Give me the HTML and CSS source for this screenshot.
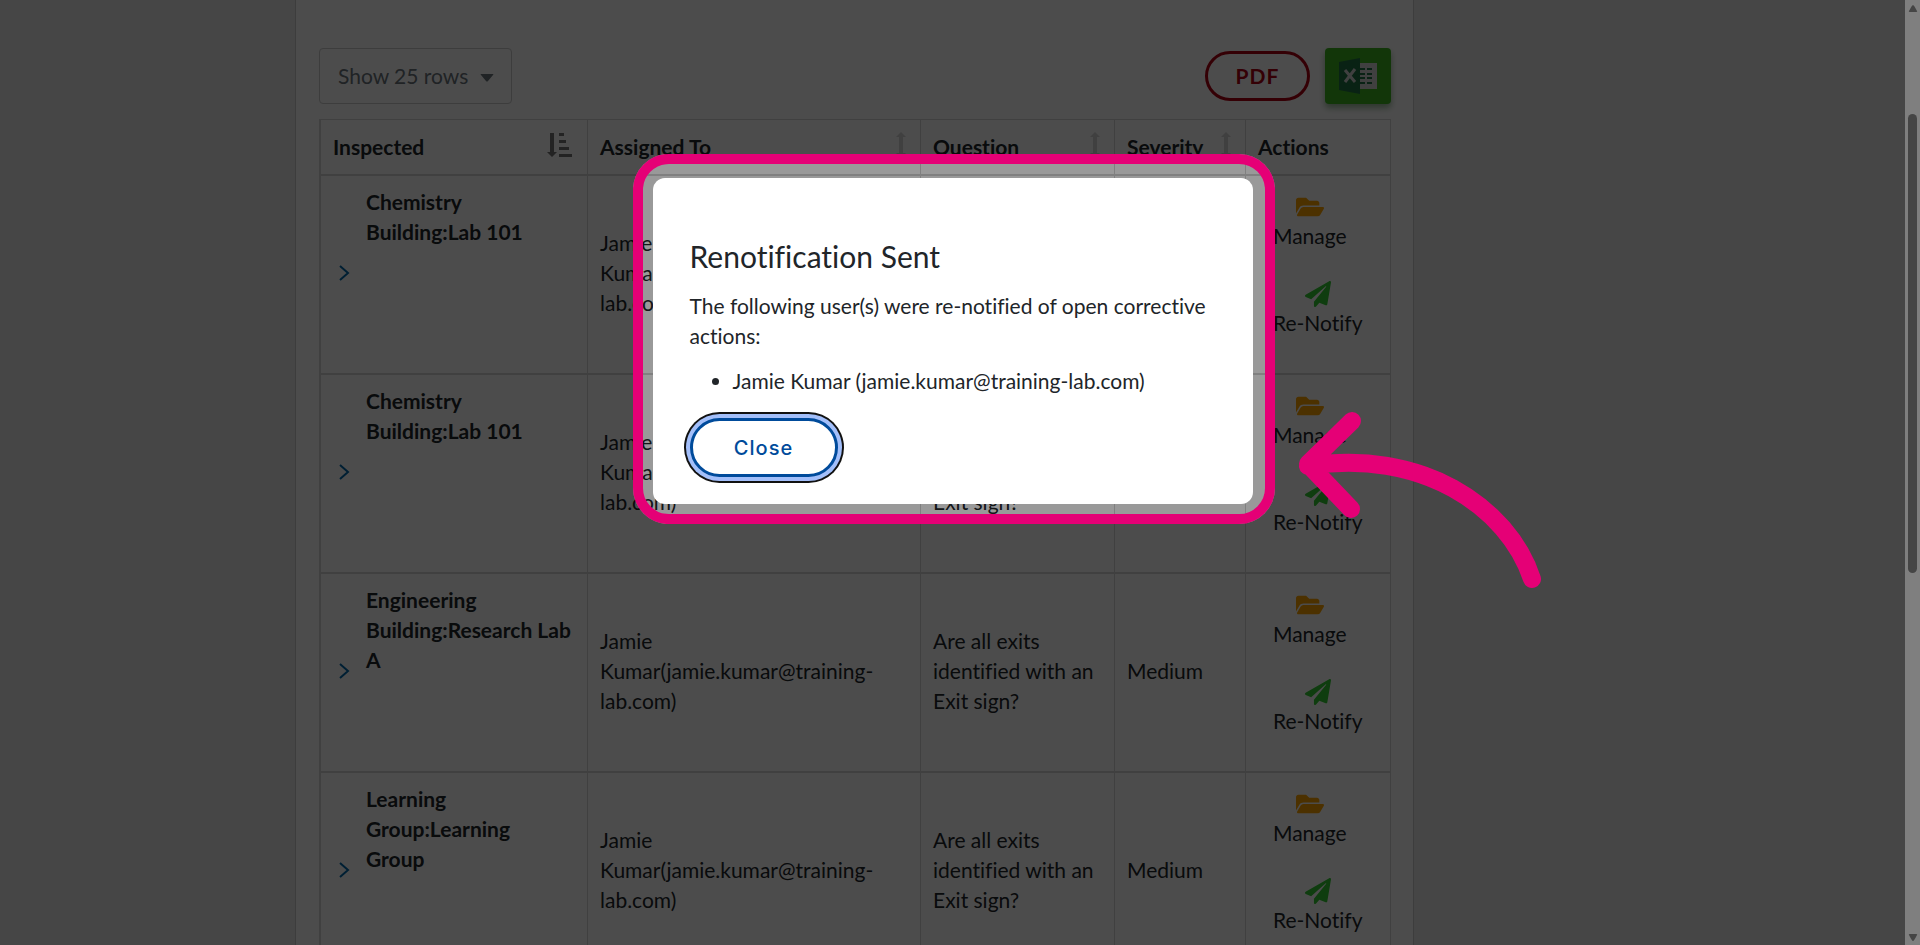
FILE: index.html
```html
<!DOCTYPE html>
<html lang="en">
<head>
  <meta charset="UTF-8" />
  <meta name="viewport" content="width=device-width, initial-scale=1.0"/>
  <title>Corrective Actions</title>
  <link rel="stylesheet" href="styles.css">
</head>
<body>
  <!-- Shared icons -->
  <svg class="sprite" aria-hidden="true">
    <symbol id="folder" viewBox="0 0 576 512">
      <path d="M572.694 292.093L500.27 416.248A63.997 63.997 0 0 1 444.989 448H45.025c-18.523 0-30.064-20.093-20.731-36.093l72.424-124.155A64 64 0 0 1 152 256h399.964c18.523 0 30.064 20.093 20.73 36.093zM152 224h328v-48c0-26.51-21.49-48-48-48H272l-64-64H48C21.49 64 0 85.49 0 112v278.046l69.077-118.418C86.214 242.25 117.989 224 152 224z"/>
    </symbol>
    <symbol id="plane" viewBox="0 0 512 512">
      <path d="M476 3.2L12.500 270.600c-18.100 10.400-15.800 35.600 2.200 43.200L121 358.400l287.300-253.200c5.500-4.900 13.300 2.600 8.600 8.300L176 407v80.500c0 23.600 28.500 32.900 42.500 15.800L282 426l124.600 52.200c14.200 6 30.400-2.900 33-18.200l72-432C515 7.800 493.300-6.800 476 3.200z"/>
    </symbol>
    <symbol id="chevron" viewBox="0 0 12 18">
      <path d="M2 2l8 7-8 7" fill="none" stroke="currentColor" stroke-width="2"/>
    </symbol>
    <symbol id="updown" viewBox="0 0 10 26">
      <path d="M5 0l5 5H7v16h3l-5 5-5-5h3V5H0z"/>
    </symbol>
    <symbol id="sorted" viewBox="0 0 26 26">
      <path d="M3 1h4v19h3l-5 5-5-5h3zM12 1h5v3h-5zM12 8h7v3h-7zM12 15h10v3H12zM12 22h13v3H12z"/>
    </symbol>
  </svg>

  <main class="panel">
    <div class="toolbar">
      <div class="rows-select">
        <select aria-label="Rows shown">
          <option>Show 25 rows</option>
          <option>Show 50 rows</option>
        </select>
        <svg class="caret" viewBox="0 0 14 8"><path d="M1 0h12q1 0 0 1L8 7q-1 1-2 0L1 1q-1-1 0-1z"/></svg>
      </div>
      <div class="exports">
        <button class="pdf">PDF</button>
        <button class="excel" aria-label="Export to Excel">
          <svg viewBox="0 0 38 36">
            <path fill="#d8d8d8" d="M21 5h17v26H21z"/>
            <path fill="#207245" d="M21 10h5v2h-5zM28 10h5v2h-5zM21 15h5v2h-5zM28 15h5v2h-5zM21 19h5v2h-5zM28 19h5v2h-5zM21 24h5v2h-5zM28 24h5v2h-5z"/>
            <path fill="#207245" d="M0 4l21-4v36L0 32z"/>
            <path stroke="#d8d8d8" stroke-width="3" fill="none" d="M6 12l10 12M16 11L6 24"/>
          </svg>
        </button>
      </div>
    </div>

    <table class="actions-table">
      <colgroup>
        <col class="col-inspected">
        <col>
        <col class="col-question">
        <col class="col-severity">
        <col class="col-actions">
      </colgroup>
      <thead>
        <tr>
          <th><div class="head">Inspected <svg class="sorted"><use href="#sorted"/></svg></div></th>
          <th><div class="head">Assigned To <svg class="updown"><use href="#updown"/></svg></div></th>
          <th><div class="head">Question <svg class="updown"><use href="#updown"/></svg></div></th>
          <th><div class="head">Severity <svg class="updown"><use href="#updown"/></svg></div></th>
          <th>Actions</th>
        </tr>
      </thead>
      <tbody>
        <tr>
          <td><div class="inspected"><button class="expand" aria-label="Expand"><svg><use href="#chevron"/></svg></button><strong>Chemistry Building:Lab 101</strong></div></td>
          <td>Jamie Kumar(jamie.kumar@training-lab.com)</td>
          <td>Are all exits identified with an Exit sign?</td>
          <td>Medium</td>
          <td>
            <div class="row-actions">
              <a href="#" class="manage"><svg><use href="#folder"/></svg>Manage</a>
              <a href="#" class="renotify"><svg><use href="#plane"/></svg>Re-Notify</a>
            </div>
          </td>
        </tr>
        <tr>
          <td><div class="inspected"><button class="expand" aria-label="Expand"><svg><use href="#chevron"/></svg></button><strong>Chemistry Building:Lab 101</strong></div></td>
          <td>Jamie Kumar(jamie.kumar@training-lab.com)</td>
          <td>Are all exits identified with an Exit sign?</td>
          <td>Medium</td>
          <td>
            <div class="row-actions">
              <a href="#" class="manage"><svg><use href="#folder"/></svg>Manage</a>
              <a href="#" class="renotify"><svg><use href="#plane"/></svg>Re-Notify</a>
            </div>
          </td>
        </tr>
        <tr>
          <td><div class="inspected"><button class="expand" aria-label="Expand"><svg><use href="#chevron"/></svg></button><strong>Engineering Building:Research Lab A</strong></div></td>
          <td>Jamie Kumar(jamie.kumar@training-lab.com)</td>
          <td>Are all exits identified with an Exit sign?</td>
          <td>Medium</td>
          <td>
            <div class="row-actions">
              <a href="#" class="manage"><svg><use href="#folder"/></svg>Manage</a>
              <a href="#" class="renotify"><svg><use href="#plane"/></svg>Re-Notify</a>
            </div>
          </td>
        </tr>
        <tr>
          <td><div class="inspected"><button class="expand" aria-label="Expand"><svg><use href="#chevron"/></svg></button><strong>Learning Group:Learning<br>Group</strong></div></td>
          <td>Jamie Kumar(jamie.kumar@training-lab.com)</td>
          <td>Are all exits identified with an Exit sign?</td>
          <td>Medium</td>
          <td>
            <div class="row-actions">
              <a href="#" class="manage"><svg><use href="#folder"/></svg>Manage</a>
              <a href="#" class="renotify"><svg><use href="#plane"/></svg>Re-Notify</a>
            </div>
          </td>
        </tr>
      </tbody>
    </table>
  </main>

  <div class="scrollbar">
    <svg class="scroll-arrow" viewBox="0 0 10 8"><path d="M5 0q1 0 4 6 1 1-1 1H2Q0 7 1 6 4 0 5 0z"/></svg>
    <div class="scroll-thumb"></div>
    <svg class="scroll-arrow down" viewBox="0 0 10 8"><path d="M5 0q1 0 4 6 1 1-1 1H2Q0 7 1 6 4 0 5 0z"/></svg>
  </div>

  <div class="backdrop">
    <div class="modal" role="dialog" aria-labelledby="modal-title">
      <h2 id="modal-title">Renotification Sent</h2>
      <p>The following user(s) were re-notified of open corrective actions:</p>
      <ul>
        <li>Jamie Kumar (jamie.kumar@training-lab.com)</li>
      </ul>
      <button class="close">Close</button>
      <!-- Arrow pointing at the dialog -->
      <svg class="arrow" viewBox="0 0 250 180">
        <path d="M57 12L13 55l43 45M13 57C125 39 213 97 237 170"/>
      </svg>
    </div>
  </div>
</body>
</html>
```

FILE: styles.css
```css
* {
  box-sizing: border-box;
}
body {
  margin: 0;
  height: 100vh;
  overflow: hidden;
  display: flex;
  background-color: #e9e9e9;
  color: #212529;
  font-family: Lato, "Liberation Sans", sans-serif;
  font-size: 21px;
  line-height: 30px;
  font-variant-ligatures: none;
}
button, select {
  font: inherit;
  cursor: pointer;
}
svg {
  fill: currentColor;
  flex-shrink: 0;
}
.sprite {
  display: none;
}

/* Page */
.panel {
  flex: 1;
  margin: 0 491px 0 295px;
  padding: 48px 22px 0 23px;
  background-color: #fff;
  border: solid #ccc;
  border-width: 0 1px;
}
.toolbar {
  display: flex;
  justify-content: space-between;
  align-items: center;
  margin-bottom: 15px;
}
.rows-select {
  position: relative;
}
.rows-select select {
  display: block;
  width: 193px;
  height: 56px;
  padding: 0 18px;
  appearance: none;
  background-color: transparent;
  border: 1px solid #ccc;
  border-radius: 4px;
  color: #6c757d;
}
.caret {
  position: absolute;
  right: 18px;
  top: 26px;
  width: 14px;
  height: 8px;
  color: #6c757d;
  pointer-events: none;
}
.exports {
  display: flex;
  align-items: center;
  gap: 15px;
}
.pdf {
  width: 105px;
  height: 50px;
  padding: 0;
  background-color: transparent;
  border: 3px solid #b00012;
  border-radius: 25px;
  color: #b00012;
  font-weight: bold;
  letter-spacing: 1px;
}
.excel {
  display: flex;
  justify-content: center;
  align-items: center;
  width: 66px;
  height: 56px;
  padding: 0;
  background-color: #3cb521;
  border: none;
  border-radius: 4px;
  box-shadow: 0 4px 6px rgba(0,80,0,0.4);
}
.excel svg {
  width: 38px;
  height: 36px;
}

/* Table */
.actions-table {
  width: 100%;
  table-layout: fixed;
  border-collapse: separate;
  border-spacing: 0;
  border: solid #d5d5d5;
  border-width: 1px 1px 0 1px;
}
.col-inspected { width: 267px; }
.col-question { width: 194px; }
.col-severity { width: 131px; }
.col-actions { width: 145px; }
.actions-table th,
.actions-table td {
  padding: 12px;
  text-align: left;
  border-left: 1px solid #d5d5d5;
  border-bottom: 2px solid #d5d5d5;
}
.actions-table td {
  height: 199px;
  padding: 11px 12px 14px;
}
.head {
  display: flex;
  justify-content: space-between;
}
.sorted {
  width: 26px;
  height: 26px;
  margin-right: 2px;
  color: #777;
}
.updown {
  width: 10px;
  height: 26px;
  margin-right: 2px;
  color: #d5d5d5;
}
.inspected {
  display: flex;
  height: 172px;
}
.expand {
  display: flex;
  align-items: center;
  padding: 0 16px 0 5px;
  background: none;
  border: none;
  color: #0069aa;
}
.expand svg {
  width: 12px;
  height: 18px;
}
.row-actions {
  display: flex;
  flex-direction: column;
  align-items: flex-start;
  gap: 28px;
  padding: 0 0 16px 15px;
}
.row-actions a {
  display: flex;
  flex-direction: column;
  align-items: center;
  color: inherit;
  text-decoration: none;
}
.row-actions svg {
  width: 28px;
  height: 26px;
  margin: 2px 0 1px;
}
.manage svg {
  color: orange;
}
.renotify svg {
  color: limegreen;
}

/* Scrollbar */
.scrollbar {
  display: flex;
  flex-direction: column;
  align-items: center;
  width: 15px;
  padding: 5px 0 4px;
  background-color: #fff;
  color: #8b8b8b;
}
.scroll-arrow {
  width: 10px;
  height: 8px;
}
.scroll-arrow.down {
  margin-top: auto;
  transform: rotate(180deg);
}
.scroll-thumb {
  width: 9px;
  height: 49%;
  margin-top: 101px;
  background-color: #8b8b8b;
  border-radius: 5px;
}

/* Modal */
.backdrop {
  position: fixed;
  inset: 0 15px 0 0;
  display: flex;
  justify-content: center;
  align-items: flex-start;
  padding-top: 178px;
  background-color: rgba(0,0,0,0.4);
}
.modal {
  position: relative;
  width: 600px;
  padding: 60px 37px 27px;
  background-color: #fff;
  border-radius: 12px;
}
/* Pink ring, its shadow dims everything around the dialog */
.modal::after {
  content: "";
  position: absolute;
  inset: -24px -22px -20px -20px;
  border: 10px solid #e50076;
  border-radius: 36px;
  box-shadow: 0 0 0 2000px rgba(0,0,0,0.5);
  pointer-events: none;
}
.modal h2 {
  margin: 0 0 17px;
  font-size: 30px;
  font-weight: normal;
  line-height: 36px;
}
.modal p {
  margin: 0 0 15px;
}
.modal ul {
  margin: 0 0 22px;
  padding-left: 43px;
}
.close {
  display: block;
  width: 148px;
  height: 59px;
  background-color: #fff;
  border: 3px solid #004b9b;
  border-radius: 30px;
  box-shadow: 0 0 0 4px #a3bffa, 0 0 0 6px #111;
  color: #004b9b;
  font-family: Inter, sans-serif;
  font-size: 20px;
  font-weight: 500;
  letter-spacing: 1px;
}
.arrow {
  position: absolute;
  z-index: 1;
  left: 642px;
  top: 231px;
  width: 250px;
  height: 180px;
  fill: none;
  stroke: #e50076;
  stroke-width: 18;
  stroke-linecap: round;
  stroke-linejoin: round;
}
```
